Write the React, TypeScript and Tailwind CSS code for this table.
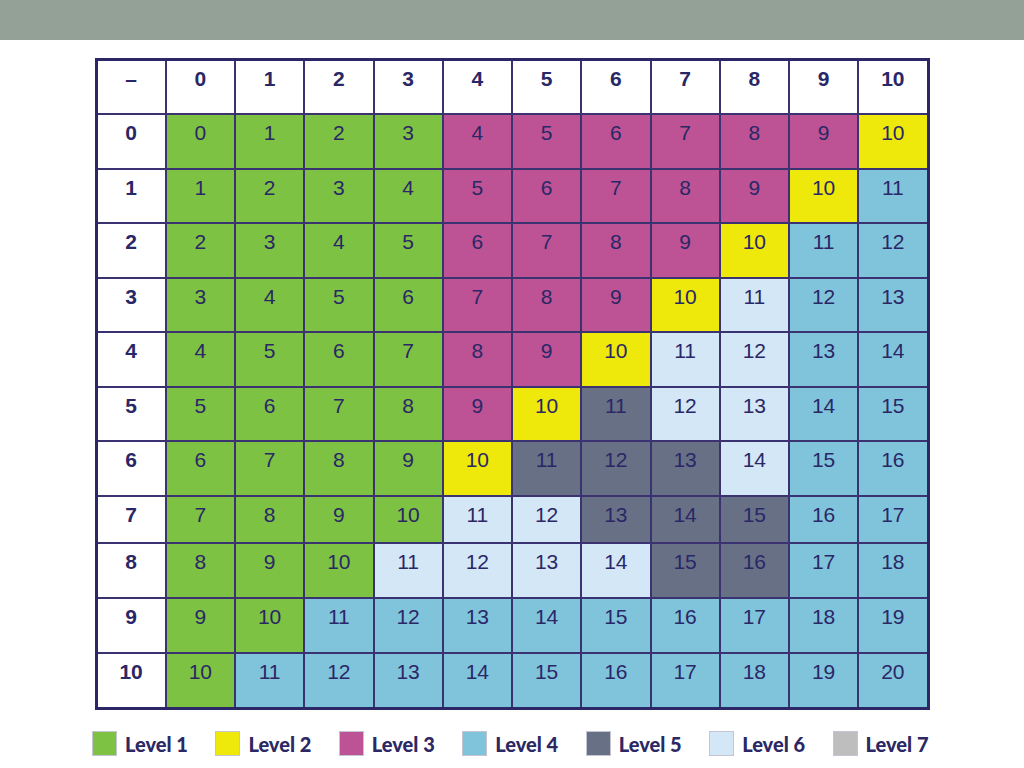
import React from 'react';

const colors: Record<string, string> = {
  G: 'bg-[#7dc242]',
  Y: 'bg-[#eee90b]',
  M: 'bg-[#bd5394]',
  B: 'bg-[#80c4dc]',
  S: 'bg-[#687086]',
  P: 'bg-[#d4e7f7]',
};

// level map, one string per row (cols 0..10)
const levelMap = [
  'GGGGMMMMMMY',
  'GGGGMMMMMYB',
  'GGGGMMMMYBB',
  'GGGGMMMYPBB',
  'GGGGMMYPPBB',
  'GGGGMYSPPBB',
  'GGGGYSSSPBB',
  'GGGGPPSSSBB',
  'GGGPPPPSSBB',
  'GGBBBBBBBBB',
  'GBBBBBBBBBB',
];

const legend = [
  { label: 'Level 1', cls: 'bg-[#7dc242]' },
  { label: 'Level 2', cls: 'bg-[#eee90b]' },
  { label: 'Level 3', cls: 'bg-[#bd5394]' },
  { label: 'Level 4', cls: 'bg-[#80c4dc]' },
  { label: 'Level 5', cls: 'bg-[#687086]' },
  { label: 'Level 6', cls: 'bg-[#d4e7f7]' },
  { label: 'Level 7', cls: 'bg-[#bebebe]' },
];

const nums = Array.from({ length: 11 }, (_, i) => i);

export default function App() {
  return (
    <div className="w-[1024px] h-[768px] bg-white overflow-hidden font-[family-name:'Liberation_Sans',Arial,sans-serif] text-[#2a2766]">
      <div className="h-[40px] bg-[#93a196]" />

      {/* Addition table */}
      <div className="mx-auto mt-[18px] w-[835px] border-[3px] border-[#2c2766] bg-[#3b3371] grid grid-cols-12 gap-[2px] grid-rows-[52px_53px_52px_53px_52px_53px_52px_53px_45px_53px_53px_53px]">
        <div className="bg-white text-center text-[21px] leading-6 pt-[6px] font-bold">–</div>
        {nums.map(c => (
          <div key={'h' + c} className="bg-white text-center text-[21px] leading-6 pt-[6px] font-bold">
            {c}
          </div>
        ))}
        {nums.map(r => (
          <React.Fragment key={r}>
            <div className="bg-white text-center text-[21px] leading-6 pt-[6px] font-bold">{r}</div>
            {nums.map(c => (
              <div
                key={c}
                className={`${colors[levelMap[r][c]]} text-center text-[21px] leading-6 pt-[6px]`}
              >
                {r + c}
              </div>
            ))}
          </React.Fragment>
        ))}
      </div>

      {/* Legend */}
      <div className="ml-[92px] mt-[21px] w-[864px] grid grid-cols-7">
        {legend.map(l => (
          <div key={l.label} className="flex items-center gap-2">
            <div className={`w-[25px] h-[25px] border border-[#c4c4d2] ${l.cls}`} />
            <span className="font-[family-name:Lato,sans-serif] font-black text-[20px] leading-none text-[#2b2864]">
              {l.label}
            </span>
          </div>
        ))}
      </div>
    </div>
  );
}
